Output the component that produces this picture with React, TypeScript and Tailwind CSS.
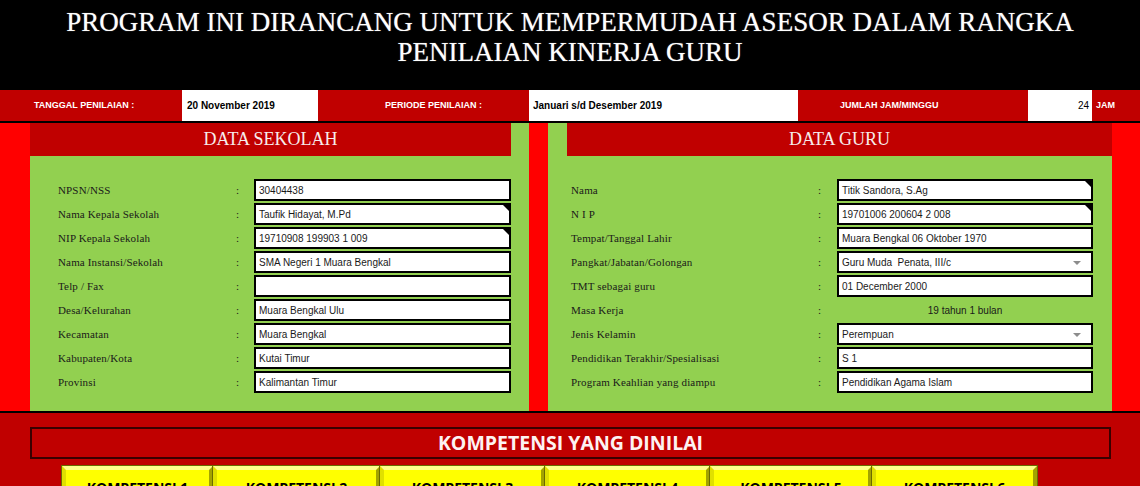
import React from "react"

const serif = "font-['Liberation_Serif','Times_New_Roman',serif]"
const sans = "font-['Liberation_Sans',Arial,sans-serif]"

type Field = {
  label: string
  value?: string
  note?: boolean
  select?: boolean
  plain?: boolean
}

const sekolah: Field[] = [
  { label: "NPSN/NSS", value: "30404438" },
  { label: "Nama Kepala Sekolah", value: "Taufik Hidayat, M.Pd", note: true },
  { label: "NIP Kepala Sekolah", value: "19710908 199903 1 009", note: true },
  { label: "Nama Instansi/Sekolah", value: "SMA Negeri 1 Muara Bengkal" },
  { label: "Telp / Fax", value: "" },
  { label: "Desa/Kelurahan", value: "Muara Bengkal Ulu" },
  { label: "Kecamatan", value: "Muara Bengkal" },
  { label: "Kabupaten/Kota", value: "Kutai Timur" },
  { label: "Provinsi", value: "Kalimantan Timur" },
]

const guru: Field[] = [
  { label: "Nama", value: "Titik Sandora, S.Ag", note: true },
  { label: "N I P", value: "19701006 200604 2 008", note: true },
  { label: "Tempat/Tanggal Lahir", value: "Muara Bengkal 06 Oktober 1970" },
  { label: "Pangkat/Jabatan/Golongan", value: "Guru Muda  Penata, III/c", select: true },
  { label: "TMT sebagai guru", value: "01 December 2000" },
  { label: "Masa Kerja", value: "19 tahun 1 bulan", plain: true },
  { label: "Jenis Kelamin", value: "Perempuan", select: true },
  { label: "Pendidikan Terakhir/Spesialisasi", value: "S 1" },
  { label: "Program Keahlian yang diampu", value: "Pendidikan Agama Islam" },
]

const tombol = [
  { label: "KOMPETENSI 1", w: "w-[151px]" },
  { label: "KOMPETENSI 2", w: "w-[167px]" },
  { label: "KOMPETENSI 3", w: "w-[165px]" },
  { label: "KOMPETENSI 4", w: "w-[165px]" },
  { label: "KOMPETENSI 5", w: "w-[162px]" },
  { label: "KOMPETENSI 6", w: "w-[165px]" },
]

function Row({ f, labelW, colonW, boxW }: { f: Field; labelW: string; colonW: string; boxW: string }) {
  return (
    <div className="flex h-[22px] items-center">
      <div className={`${labelW} ${serif} text-[11px] tracking-[0.15px] text-[#1a1a1a] whitespace-nowrap`}>{f.label}</div>
      <div className={`${colonW} ${serif} text-[11px] text-[#1a1a1a]`}>:</div>
      {f.plain ? (
        <div className={`${boxW} ${sans} text-center text-[10px] text-[#1a1a1a]`}>{f.value}</div>
      ) : (
        <div
          className={`${boxW} ${sans} relative flex h-[22px] items-center border-2 border-black bg-white pl-[3px] text-[10px] text-[#1a1a1a] whitespace-pre`}
        >
          {f.value}
          {f.note && (
            <span className="absolute right-0 top-0 h-0 w-0 border-l-[6px] border-t-[6px] border-l-transparent border-t-black" />
          )}
          {f.select && (
            <span className="absolute right-[10px] top-[8px] h-0 w-0 border-x-[4px] border-t-[4px] border-x-transparent border-t-[#8c8c8c]" />
          )}
        </div>
      )}
    </div>
  )
}

export default function App() {
  return (
    <div className="h-[486px] w-[1140px] overflow-hidden bg-[#c00000]">
      {/* Judul */}
      <header
        className={`h-[90px] bg-black pt-[7px] text-center ${serif} text-[27px] leading-[30px] text-white [text-shadow:0_0_1px_#9a9a9a]`}
      >
        <div>PROGRAM INI DIRANCANG UNTUK MEMPERMUDAH ASESOR DALAM RANGKA</div>
        <div>PENILAIAN KINERJA GURU</div>
      </header>

      {/* Info penilaian */}
      <div className={`flex h-[33px] border-b-2 border-black ${sans} text-[9px] font-bold`}>
        <div className="flex w-[182px] items-center bg-[#c00000] pl-[34px] text-white">TANGGAL PENILAIAN :</div>
        <div className="flex w-[136px] items-center bg-white pl-[5px] text-[10px] text-black">20 November 2019</div>
        <div className="flex w-[211px] items-center bg-[#c00000] pl-[67px] text-white">PERIODE PENILAIAN :</div>
        <div className="flex w-[269px] items-center bg-white pl-[4px] text-[10px] text-black">Januari s/d Desember 2019</div>
        <div className="flex w-[230px] items-center bg-[#c00000] pl-[42px] text-white">JUMLAH JAM/MINGGU</div>
        <div className="flex w-[64px] items-center justify-end bg-white pr-[3px] text-[10px] font-normal text-black">24</div>
        <div className="flex flex-1 items-center bg-[#c00000] pl-[4px] text-white">JAM</div>
      </div>

      {/* Data sekolah & data guru */}
      <div className="flex h-[288px] bg-[#ff0000] pl-[30px]">
        <section className="w-[499px] bg-[#92d050]">
          <div className={`flex h-[33px] w-[481px] items-center justify-center bg-[#c00000] ${serif} text-[18px] text-[#f7ecec]`}>
            DATA SEKOLAH
          </div>
          <div className="flex flex-col gap-[2px] pl-[28px] pt-[23px]">
            {sekolah.map((f) => (
              <Row key={f.label} f={f} labelW="w-[178px]" colonW="w-[18px]" boxW="w-[257px]" />
            ))}
          </div>
        </section>

        <div className="w-[19px]" />

        <section className="w-[564px] bg-[#92d050]">
          <div className={`ml-[19px] flex h-[33px] items-center justify-center bg-[#c00000] ${serif} text-[18px] text-[#f7ecec]`}>
            DATA GURU
          </div>
          <div className="flex flex-col gap-[2px] pl-[23px] pt-[23px]">
            {guru.map((f) => (
              <Row key={f.label} f={f} labelW="w-[247px]" colonW="w-[19px]" boxW="w-[256px]" />
            ))}
          </div>
        </section>
      </div>

      {/* Kompetensi */}
      <div className="border-t-2 border-black pt-[14px]">
        <div className="mx-[30px] flex h-[32px] w-[1081px] items-center justify-center border-2 border-[#3a0000] font-['Open_Sans',sans-serif] text-[19.5px] font-bold text-[#fdf2f2]">
          KOMPETENSI YANG DINILAI
        </div>
        <div className="mt-[7px] flex pl-[62px]">
          {tombol.map((t) => (
            <button
              key={t.label}
              className={`${t.w} h-[40px] border-[4px] border-b-[#8f8f00] border-l-[#e0e000] border-r-[#a3a300] border-t-[#ffff8c] bg-[#ffff00] pt-[3px] font-['Open_Sans',sans-serif] text-[14px] font-bold leading-[20px] text-black outline outline-1 outline-[#6b6b00]`}
            >
              {t.label}
            </button>
          ))}
        </div>
      </div>
    </div>
  )
}
